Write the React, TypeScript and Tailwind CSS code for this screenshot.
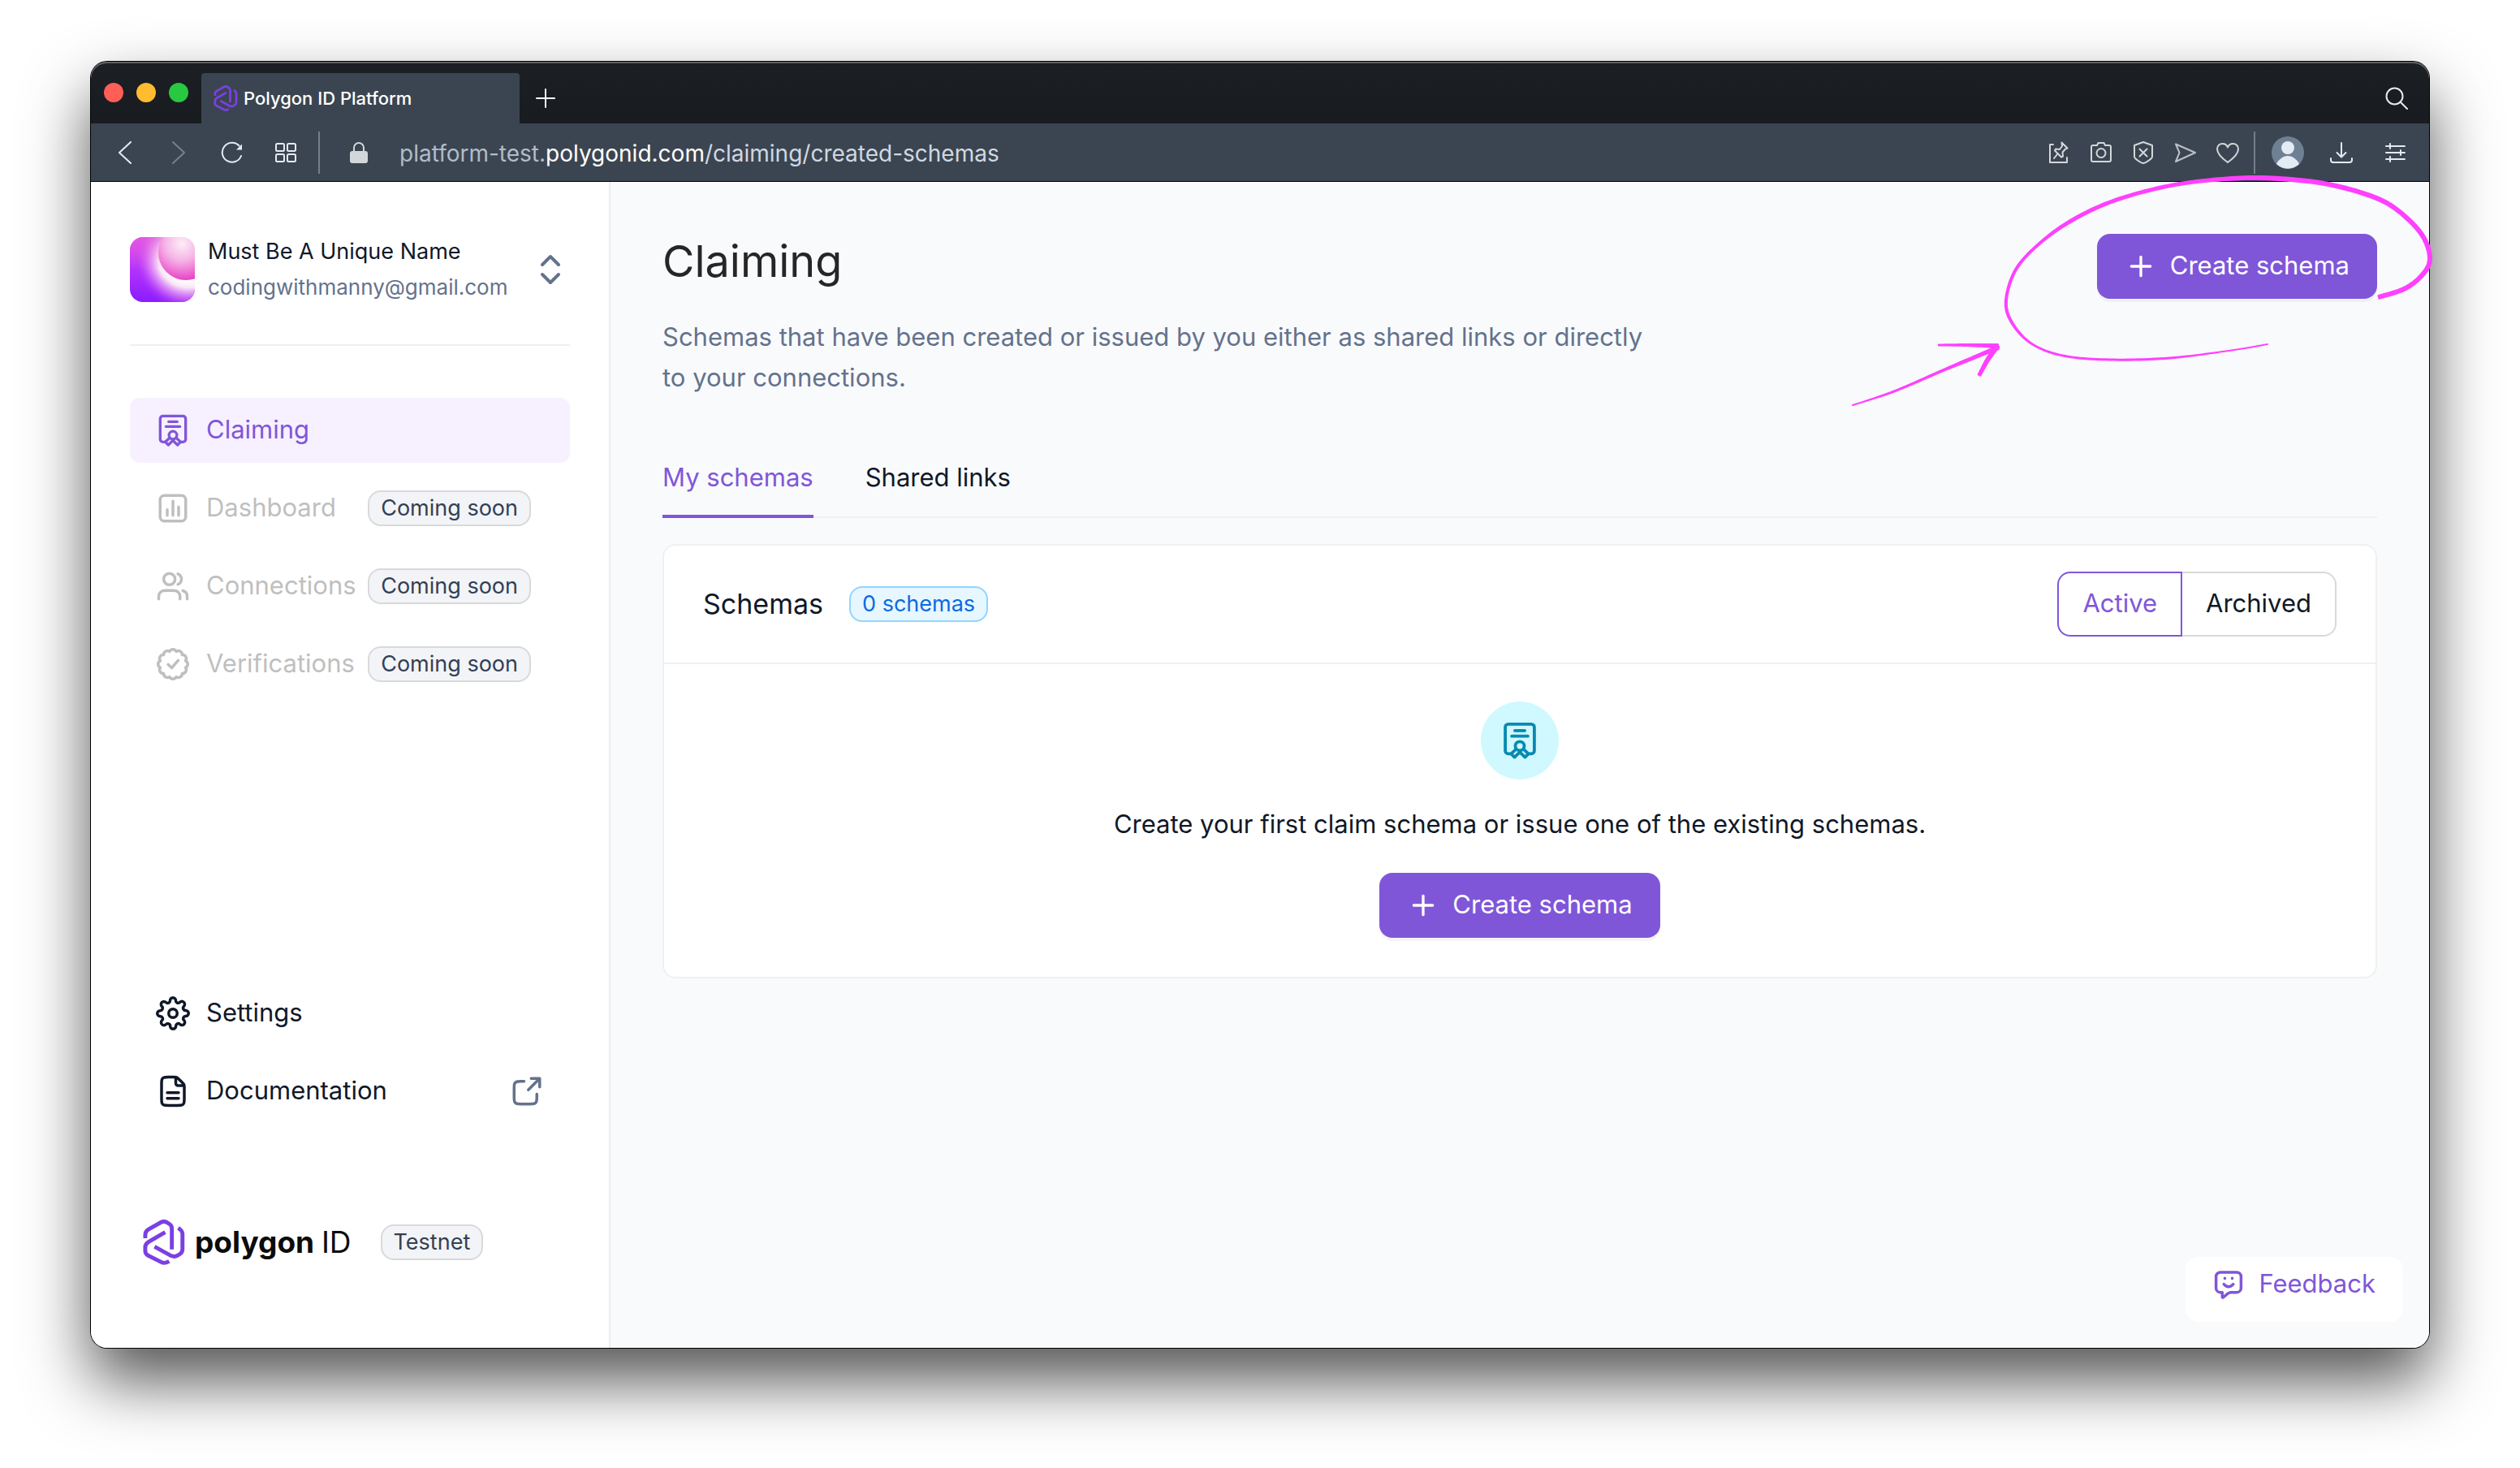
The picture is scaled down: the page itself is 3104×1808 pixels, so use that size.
import type { ReactNode } from "react";
import { FiSettings } from "react-icons/fi";

type IconProps = { className?: string; children: ReactNode; viewBox?: string; strokeWidth?: number };

function Icon({ className = "size-[42px]", children, viewBox = "0 0 24 24", strokeWidth = 2 }: IconProps) {
  return (
    <svg
      aria-hidden="true"
      viewBox={viewBox}
      className={`shrink-0 ${className}`}
      fill="none"
      stroke="currentColor"
      strokeWidth={strokeWidth}
      strokeLinecap="round"
      strokeLinejoin="round"
    >
      {children}
    </svg>
  );
}

function CertificateIcon({ className }: { className?: string }) {
  return (
    <Icon viewBox="-0.6 -0.6 25.2 25.2" className={className}>
      <path d="M6.4 20.6H4.6a2 2 0 0 1-2-2V3.4a2 2 0 0 1 2-2h14.8a2 2 0 0 1 2 2v15.2a2 2 0 0 1-2 2h-1.8" />
      <path d="M8.8 5.6h6.4M6.8 9.2h10.4" />
      <circle cx="12" cy="15.6" r="2.9" />
      <path d="M9.6 17.6l-3.2 3 2.2 2.2 3.4-3.3 3.4 3.3 2.2-2.2-3.2-3" />
    </Icon>
  );
}

function ChartIcon() {
  return (
    <Icon>
      <rect x="3" y="3" width="18" height="18" rx="3" />
      <path d="M8 13v4M12 7v10M16 11v6" />
    </Icon>
  );
}

function UsersIcon() {
  return (
    <Icon>
      <path d="M22 21V19C22 17.1362 20.7252 15.5701 19 15.126M15.5 3.29076C16.9659 3.88415 18 5.32131 18 7C18 8.67869 16.9659 10.1159 15.5 10.7092M17 21C17 19.1362 17 18.2044 16.6955 17.4693C16.2895 16.4892 15.5108 15.7105 14.5307 15.3045C13.7956 15 12.8638 15 11 15H8C6.13623 15 5.20435 15 4.46927 15.3045C3.48915 15.7105 2.71046 16.4892 2.30448 17.4693C2 18.2044 2 19.1362 2 21M13.5 7C13.5 9.20914 11.7091 11 9.5 11C7.29086 11 5.5 9.20914 5.5 7C5.5 4.79086 7.29086 3 9.5 3C11.7091 3 13.5 4.79086 13.5 7Z" />
    </Icon>
  );
}

const scallop = (() => {
  const lobes = 12;
  const point = (i: number) => {
    const a = ((i + 0.5) * 2 * Math.PI) / lobes - Math.PI / 2;
    return `${(12 + 9.2 * Math.cos(a)).toFixed(2)} ${(12 + 9.2 * Math.sin(a)).toFixed(2)}`;
  };
  let d = `M${point(-1)}`;
  for (let i = 0; i < lobes; i++) d += `A2.6 2.6 0 0 1 ${point(i)}`;
  return `${d}Z`;
})();

function VerifiedIcon() {
  return (
    <Icon>
      <path d={scallop} />
      <path d="M8.6 12.2l2.5 2.4 4.6-5.2" />
    </Icon>
  );
}

function FileIcon() {
  return (
    <Icon>
      <path d="M14 2.3V6.4c0 .9.7 1.6 1.6 1.6h4.1M8 13h8M8 17h8M20 10v7.2c0 1.7 0 2.5-.3 3.2a3 3 0 0 1-1.3 1.3c-.7.3-1.5.3-3.2.3H8.8c-1.7 0-2.5 0-3.2-.3a3 3 0 0 1-1.3-1.3C4 19.7 4 18.9 4 17.2V6.8c0-1.7 0-2.5.3-3.2a3 3 0 0 1 1.3-1.3C6.3 2 7.1 2 8.8 2H12.7c.7 0 1.1 0 1.5.1.3.1.6.2.9.4.3.2.5.4 1 .9l2.5 2.5c.5.5.7.7.9 1 .2.3.3.6.4.9.1.4.1.7.1 1.500Z" />
    </Icon>
  );
}

function ExternalIcon() {
  return (
    <Icon className="size-[42px] text-[#64728c]">
      <path d="M21 9V3m0 0h-6m6 0l-8 8m-3-6H7.8c-1.68 0-2.52 0-3.162.327a3 3 0 0 0-1.311 1.311C3 7.28 3 8.12 3 9.8v6.4c0 1.68 0 2.52.327 3.162a3 3 0 0 0 1.311 1.311C5.28 21 6.12 21 7.8 21h6.4c1.68 0 2.52 0 3.162-.327a3 3 0 0 0 1.311-1.311C19 18.72 19 17.88 19 16.2V14" />
    </Icon>
  );
}

function PlusIcon() {
  return (
    <Icon className="size-10">
      <path d="M12 5v14M5 12h14" />
    </Icon>
  );
}

function PolygonMark({ className }: { className: string }) {
  return (
    <svg aria-hidden="true" viewBox="50 40 157 171" className={`shrink-0 ${className}`} fill="none" stroke="#7b3fe4" strokeWidth="15">
      <path d="M58 110V98Q58 84 70 77L118 50Q128 45 138 50L148 56Q158 62 158 74V152" />
      <path d="M133 88L70 124Q58 131 58 144V158Q58 170 70 176L118 200Q130 207 148 197" />
      <path d="M93 142L155 176Q168 182 180 175L188 170Q198 163 198 152V94Q198 82 182 71" />
    </svg>
  );
}

function Badge({ children }: { children: ReactNode }) {
  return (
    <span className="rounded-2xl border-2 border-[#d9d9d9] bg-[#f2f4f8] px-3.5 text-[27px] leading-10 whitespace-nowrap text-[#344054]">
      {children}
    </span>
  );
}

function NavItem({ icon, label, soon }: { icon: ReactNode; label: string; soon?: boolean }) {
  return (
    <li>
      <button
        disabled={soon}
        className={`flex h-20 w-full items-center justify-between rounded-xl pr-12 pl-8 ${soon ? "text-[#bfbfbf]" : "bg-[#f6f0ff] text-[#8056d9]"}`}
      >
        <span className="flex items-center gap-5">
          {icon}
          <span className="pb-0.5">{label}</span>
        </span>
        {soon && <Badge>Coming soon</Badge>}
      </button>
    </li>
  );
}

function CreateButton() {
  return (
    <button className="flex h-20 items-center gap-4 rounded-2xl bg-[#8056d9] px-[34px] text-white shadow-[0_4px_0_rgba(0,0,0,0.04)]">
      <PlusIcon />
      <span className="pb-0.5">Create schema</span>
    </button>
  );
}

function TabBar() {
  return (
    <div className="flex h-[76px] items-end rounded-t-[20px] bg-gradient-to-b from-[#1c2024] to-[#181b1f] pr-[26px] shadow-[inset_0_2px_0_#5d6063]">
      <div className="flex h-[76px] items-center gap-4 px-4">
        <button aria-label="Close window" className="size-6 rounded-full bg-[#ff5f57]" />
        <button aria-label="Minimize window" className="size-6 rounded-full bg-[#febc2e]" />
        <button aria-label="Zoom window" className="size-6 rounded-full bg-[#28c840]" />
      </div>
      <div className="flex h-[62px] w-[392px] items-center gap-1.5 rounded-t-sm bg-[#3b4551] pl-3.5 text-[22px] font-medium text-white">
        <PolygonMark className="h-8 w-8" />
        <span>Polygon ID Platform</span>
      </div>
      <button aria-label="New tab" className="ml-5 flex h-[62px] items-center text-white">
        <Icon className="size-6" strokeWidth={2}>
          <path d="M12 1v22M1 12h22" />
        </Icon>
      </button>
      <button aria-label="Search tabs" className="ml-auto flex h-[62px] items-center text-[#e6eaee]">
        <Icon className="size-7" viewBox="0 0 28 28" strokeWidth={2}>
          <circle cx="11.5" cy="11.5" r="10" />
          <path d="M19 19l8 8" />
        </Icon>
      </button>
    </div>
  );
}

function ToolButton({ label, children, className = "" }: { label: string; children: ReactNode; className?: string }) {
  return (
    <button aria-label={label} className={`flex ${className}`}>
      <Icon className="size-7" viewBox="0 0 28 28">
        {children}
      </Icon>
    </button>
  );
}

function Toolbar() {
  return (
    <div className="flex h-[72px] items-center border-b border-black bg-[#3b4551] px-7 text-[#e3ebf2]">
      <div className="flex items-center gap-[38px]">
        <ToolButton label="Back">
          <path d="M21 1L7 14l14 13" />
        </ToolButton>
        <ToolButton label="Forward" className="text-[#76818b]">
          <path d="M7 1l14 13L7 27" />
        </ToolButton>
        <ToolButton label="Reload">
          <path d="M25 18A12 12 0 1 1 22.5 5.5" />
          <path d="M26 3.5v7h-7z" fill="currentColor" stroke="none" />
        </ToolButton>
        <ToolButton label="Speed dial">
          <rect x="2" y="3" width="10" height="9" rx="1.5" />
          <rect x="16" y="3" width="10" height="9" rx="1.5" />
          <rect x="2" y="16" width="10" height="9" rx="1.5" />
          <rect x="16" y="16" width="10" height="9" rx="1.5" />
        </ToolButton>
      </div>
      <span className="mr-8 ml-[26px] h-[52px] w-0.5 bg-[#737e88]" />
      <ToolButton label="Site information" className="text-[#d2d7d9]">
        <rect x="5" y="12" width="22" height="15" rx="3" fill="currentColor" stroke="none" />
        <path d="M10 13V8a6 6 0 0 1 12 0v5" />
      </ToolButton>
      <div className="ml-[38px] pt-0.5 text-[28px] text-[#b0bcca]">
        platform-test.<span className="text-white">polygonid.com</span>
        <span className="text-[#d0d8e0]">/claiming/created-schemas</span>
      </div>
      <div className="ml-auto flex items-center gap-6 text-[#d2d7d9]">
        <ToolButton label="Pin page">
          <path d="M7 4H3v22h21v-6" />
          <path d="M17.5 1.5l7 7-2.5 1-3.5 4 .5 5-2 1-8-8 1-2 5 .5 3-4zM12 16l-4 5" />
        </ToolButton>
        <ToolButton label="Snapshot">
          <path d="M4 5h5l1.5-3h7L19 5h5a2 2 0 0 1 2 2v16a2 2 0 0 1-2 2H4a2 2 0 0 1-2-2V7a2 2 0 0 1 2-2z" />
          <circle cx="14" cy="14.5" r="5.5" />
        </ToolButton>
        <ToolButton label="Ad blocker">
          <path d="M14 1l11 4v14c0 2-8 8-11 8S3 21 3 19V5z" />
          <path d="M9.5 9.5l9 9M18.5 9.5l-9 9" />
        </ToolButton>
        <ToolButton label="My flow" className="text-[#b9c1c7]">
          <path d="M2 3.5l24 10.5L2 25l4.5-11z" />
        </ToolButton>
        <ToolButton label="Bookmark">
          <path d="M14 26C7 21 1 15.5 1 9.5 1 5.5 4 3 7.5 3c3 0 5.5 1.5 6.5 4.5C15 4.5 17.5 3 20.5 3 24 3 27 5.5 27 9.5 27 15.5 21 21 14 26z" />
        </ToolButton>
      </div>
      <span className="mr-5 ml-[18px] h-[52px] w-0.5 bg-[#737e88]" />
      <button aria-label="Profile" className="mr-8 flex">
        <svg aria-hidden="true" viewBox="0 0 40 40" className="size-10">
          <circle cx="20" cy="20" r="20" fill="#6f8094" />
          <circle cx="20" cy="14" r="8" fill="#e3ebf5" />
          <path d="M6 34C8 29 14 24 20 24S32 29 34 34A20 20 0 0 1 6 34z" fill="#e3ebf5" />
        </svg>
      </button>
      <div className="flex items-center gap-[38px]">
        <ToolButton label="Downloads">
          <path d="M14 2v17M8.5 14l5.5 5.5L19.5 14M1 21v2a3 3 0 0 0 3 3h20a3 3 0 0 0 3-3v-2" />
        </ToolButton>
        <ToolButton label="Easy setup">
          <path d="M3 6h23M3 14h23M3 22h23M8 3v6M21 11v6M8 19v6" />
        </ToolButton>
      </div>
    </div>
  );
}

function OrgAvatar() {
  return (
    <svg aria-hidden="true" viewBox="0 0 80 80" className="size-20 shrink-0 rounded-2xl">
      <defs>
        <linearGradient id="org-base" x1="0.3" y1="0" x2="0.2" y2="1">
          <stop offset="0" stopColor="#e154ee" />
          <stop offset="0.5" stopColor="#b534fb" />
          <stop offset="1" stopColor="#8a1cff" />
        </linearGradient>
        <radialGradient id="org-glow" gradientUnits="userSpaceOnUse" cx="72" cy="24" r="66">
          <stop offset="0.45" stopColor="#fff" />
          <stop offset="0.58" stopColor="#fbe6f6" />
          <stop offset="0.78" stopColor="#e48cf5" stopOpacity="0.6" />
          <stop offset="1" stopColor="#b534fb" stopOpacity="0" />
        </radialGradient>
        <linearGradient id="org-top" x1="0" y1="0" x2="0" y2="1">
          <stop offset="0" stopColor="#e65ad8" stopOpacity="0.8" />
          <stop offset="0.5" stopColor="#e65ad8" stopOpacity="0" />
        </linearGradient>
        <radialGradient id="org-ball" gradientUnits="userSpaceOnUse" cx="64" cy="8" r="46">
          <stop offset="0" stopColor="#fdeef8" />
          <stop offset="0.45" stopColor="#f5b5e6" />
          <stop offset="1" stopColor="#e83fc6" />
        </radialGradient>
      </defs>
      <rect width="80" height="80" fill="url(#org-base)" />
      <rect width="80" height="80" fill="url(#org-glow)" />
      <rect width="42" height="80" fill="url(#org-top)" opacity="0.7" />
      <circle cx="69" cy="19" r="34" fill="url(#org-ball)" />
    </svg>
  );
}

function Sidebar() {
  return (
    <aside className="flex w-[640px] shrink-0 flex-col rounded-bl-[20px] border-r-2 border-[#ebedf0] bg-white px-12 pt-16 pb-[90px]">
      <button className="flex items-center gap-4 text-left text-[27px] leading-[44px]">
        <OrgAvatar />
        <span className="flex flex-col whitespace-nowrap">
          <span>Must Be A Unique Name</span>
          <span className="text-[26px] text-[#64728c]">codingwithmanny@gmail.com</span>
        </span>
        <Icon className="ml-auto size-12 text-[#64728c]">
          <path d="M7 15l5 5 5-5M7 9l5-5 5 5" />
        </Icon>
      </button>
      <hr className="mt-12 border-t-2 border-[#f0f0f0]" />
      <nav className="mt-16">
        <ul className="flex flex-col gap-4">
          <NavItem icon={<CertificateIcon />} label="Claiming" />
          <NavItem icon={<ChartIcon />} label="Dashboard" soon />
          <NavItem icon={<UsersIcon />} label="Connections" soon />
          <NavItem icon={<VerifiedIcon />} label="Verifications" soon />
        </ul>
      </nav>
      <div className="mt-auto flex flex-col gap-4">
        <a href="#settings" className="flex h-20 items-center gap-5 px-8">
          <FiSettings aria-hidden="true" className="size-[42px] shrink-0" />
          <span className="pb-0.5">Settings</span>
        </a>
        <a href="#documentation" className="flex h-20 items-center gap-5 px-8">
          <FileIcon />
          <span className="grow pb-0.5">Documentation</span>
          <ExternalIcon />
        </a>
      </div>
      <div className="mt-[106px] flex h-20 items-center pl-4">
        <PolygonMark className="h-14 w-[52px]" />
        <span className="ml-3 pb-0.5 text-[37px] leading-none font-bold text-[#0b0b0b]">
          polygon <span className="font-normal">ID</span>
        </span>
        <span className="ml-9 flex">
          <Badge>Testnet</Badge>
        </span>
      </div>
    </aside>
  );
}

function SchemaCard() {
  return (
    <section className="mt-8 rounded-2xl border-2 border-[#f0f0f0] bg-white">
      <header className="flex h-[146px] items-center border-b-2 border-[#f0f0f0] px-12">
        <h2 className="pb-0.5 text-[34px]">Schemas</h2>
        <span className="ml-8 rounded-2xl border-2 border-[#91d5ff] bg-[#e6f7ff] px-3.5 text-[27px] leading-10 text-[#0b6be0]">0 schemas</span>
        <div role="group" aria-label="Status" className="ml-auto flex h-20">
          <button aria-pressed="true" className="rounded-l-2xl border-2 border-[#8056d9] px-[29px] pb-0.5 text-[#8056d9]">
            Active
          </button>
          <button aria-pressed="false" className="rounded-r-2xl border-2 border-l-0 border-[#d9d9d9] px-[29px] pb-0.5">
            Archived
          </button>
        </div>
      </header>
      <div className="flex flex-col items-center pt-[46px] pb-12">
        <div className="flex size-24 items-center justify-center rounded-full bg-[#cff9fe] text-[#088ab2]">
          <CertificateIcon className="size-12" />
        </div>
        <p className="mt-[30px] leading-[50px]">Create your first claim schema or issue one of the existing schemas.</p>
        <div className="mt-[35px]">
          <CreateButton />
        </div>
      </div>
    </section>
  );
}

function Main() {
  return (
    <main className="flex min-w-0 grow flex-col rounded-br-[20px] bg-[#f9fafc] px-16 pt-16 pb-8">
      <div className="flex items-start justify-between">
        <div>
          <h1 className="text-[54px] leading-[68px] text-[#262626]">Claiming</h1>
          <p className="mt-[34px] max-w-[1230px] leading-[50px] text-[#64728c]">
            Schemas that have been created or issued by you either as shared links or directly to your connections.
          </p>
        </div>
        <CreateButton />
      </div>
      <div role="tablist" className="mt-[74px] flex gap-16 border-b-2 border-[#f0f0f0]">
        <button role="tab" aria-selected="true" className="-mb-0.5 border-b-4 border-[#8056d9] pb-[22px] leading-[48px] text-[#8056d9]">
          My schemas
        </button>
        <button role="tab" aria-selected="false" className="-mb-0.5 border-b-4 border-transparent pb-[22px] leading-[48px]">
          Shared links
        </button>
      </div>
      <SchemaCard />
      <button className="-mr-8 mt-auto flex h-20 items-center gap-4 self-end rounded-2xl bg-white pr-[34px] pb-3 pl-8 text-[#8056d9]">
        <Icon>
          <path d="M6.2 3.4h11.6a3 3 0 0 1 3 3v8.1a3 3 0 0 1-3 3h-4.3c-1.5 0-2.1.9-3 1.7l-2.3 1.9c-.4.3-.6.1-.6-.3v-3.3H6.2a3 3 0 0 1-3-3V6.4a3 3 0 0 1 3-3z" />
          <path d="M8.7 11.8c1.9 2.3 4.7 2.3 6.6 0M9.4 7.6v.1M14.6 7.6v.1" />
        </Icon>
        <span className="pb-0.5">Feedback</span>
      </button>
    </main>
  );
}

/* Each point of a pen stroke: x, y, pen width. */
type PenPoint = [number, number, number];

function brushPath(points: PenPoint[]) {
  const steps = 12;
  const at = (i: number) => points[Math.max(0, Math.min(points.length - 1, i))];
  const line: PenPoint[] = [];
  for (let i = 0; i < points.length - 1; i++) {
    for (let s = 0; s < steps; s++) {
      const t = s / steps;
      line.push(
        [0, 1, 2].map((k) => {
          const a = at(i - 1)[k], b = at(i)[k], c = at(i + 1)[k], d = at(i + 2)[k];
          return 0.5 * (2 * b + (c - a) * t + (2 * a - 5 * b + 4 * c - d) * t * t + (3 * b - a - 3 * c + d) * t * t * t);
        }) as PenPoint,
      );
    }
  }
  line.push(points[points.length - 1]);
  const left: string[] = [];
  const right: string[] = [];
  line.forEach(([x, y, w], i) => {
    const p = line[Math.max(0, i - 1)];
    const n = line[Math.min(line.length - 1, i + 1)];
    const len = Math.hypot(n[0] - p[0], n[1] - p[1]) || 1;
    const nx = (-(n[1] - p[1]) / len) * (w / 2);
    const ny = ((n[0] - p[0]) / len) * (w / 2);
    left.push(`${(x + nx).toFixed(2)} ${(y + ny).toFixed(2)}`);
    right.unshift(`${(x - nx).toFixed(2)} ${(y - ny).toFixed(2)}`);
  });
  return `M${left.concat(right).join("L")}Z`;
}

const loop: PenPoint[] = [
  [658, 160, 4], [691, 149, 4], [713, 131, 4], [721, 112, 4], [713, 86, 4], [691, 61, 4], [662, 41, 4], [618, 26, 4],
  [570, 17, 4], [504, 13, 4], [439, 17, 3], [385, 26, 3], [327, 43, 3], [279, 66, 3], [240, 94, 2], [211, 126, 2],
  [199, 164, 2], [206, 191, 2], [230, 217, 1], [269, 232, 1], [327, 237, 1], [400, 235, 1], [473, 226, 0], [521, 218, 0],
];
const shaft: PenPoint[] = [[10, 293, 0], [61, 276, 1], [124, 249, 2], [189, 222, 4]];
const barbUpper: PenPoint[] = [[116, 219, 1], [150, 219, 2], [189, 220, 4]];
const barbLower: PenPoint[] = [[189, 220, 4], [177, 236, 4], [166, 256, 3]];

function Annotation() {
  return (
    <svg
      aria-hidden="true"
      viewBox="0 0 730 310"
      className="pointer-events-none absolute top-[130px] -right-2.5 h-[310px] w-[730px]"
      fill="#ff40ff"
      stroke="#ff40ff"
      strokeWidth="2"
      strokeLinejoin="round"
    >
      <path d={brushPath(loop)} />
      <path d={brushPath(shaft)} />
      <path d={brushPath(barbUpper)} />
      <path d={brushPath(barbLower)} />
    </svg>
  );
}

export default function App() {
  return (
    <div className="flex min-h-screen bg-white px-28 pt-[76px] pb-[148px] font-['Inter',sans-serif] text-[31px] text-[#101828]">
      <div className="relative flex grow flex-col rounded-[20px] shadow-[0_0_0_1px_#000,0_40px_80px_rgba(0,0,0,0.68)]">
        <TabBar />
        <Toolbar />
        <div className="flex grow">
          <Sidebar />
          <Main />
        </div>
        <Annotation />
      </div>
    </div>
  );
}
